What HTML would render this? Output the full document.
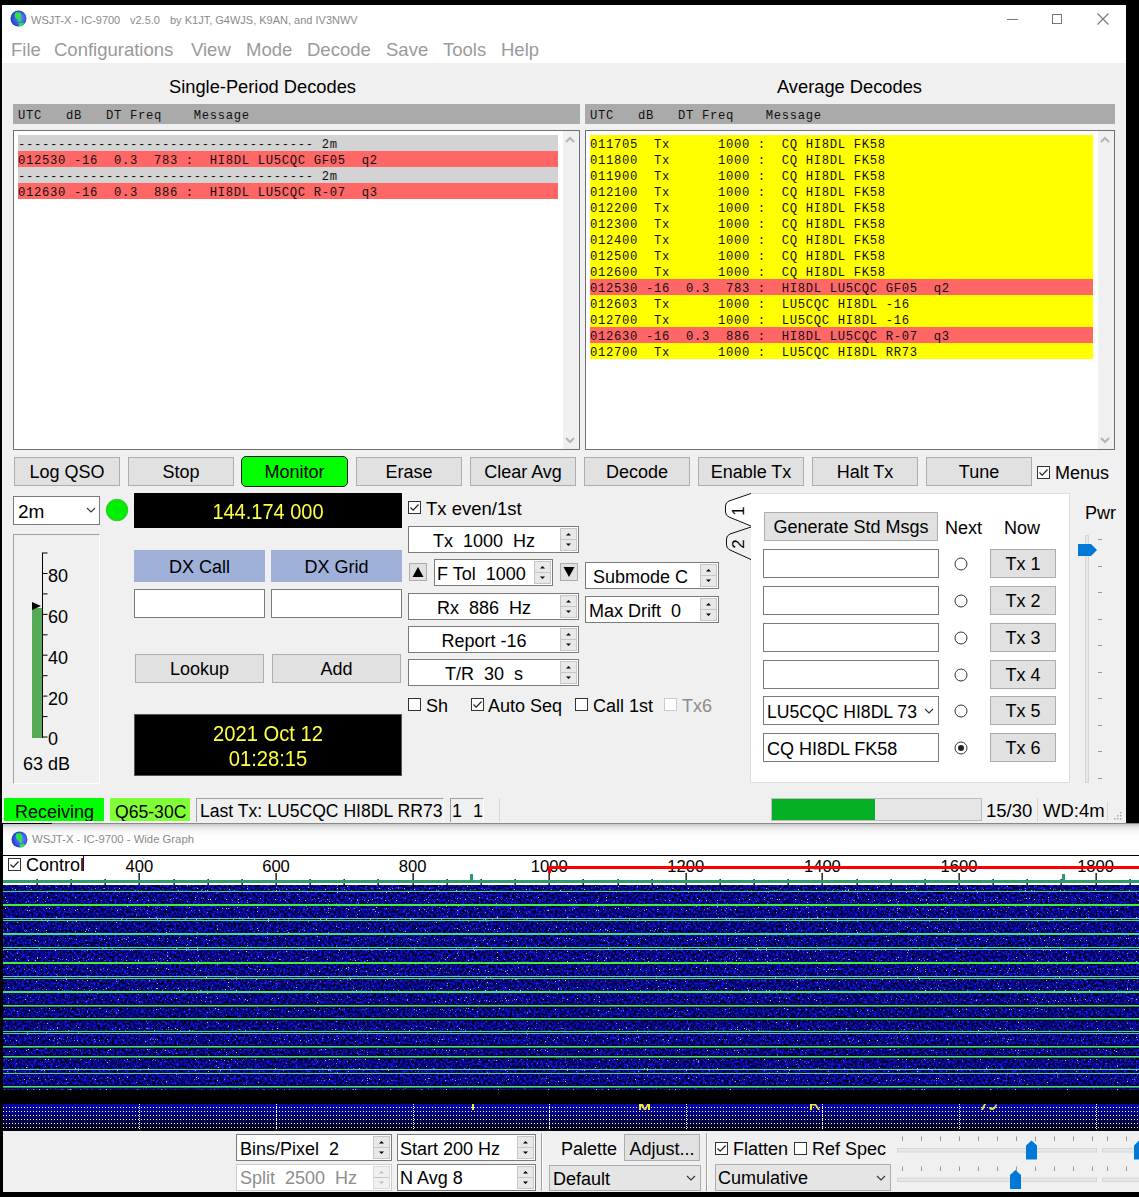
<!DOCTYPE html>
<html><head><meta charset="utf-8">
<style>
*{box-sizing:border-box;margin:0;padding:0}
html,body{width:1139px;height:1197px;overflow:hidden;background:#000}
body{position:relative;font-family:"Liberation Sans",sans-serif;color:#000}
.a{position:absolute}
.mono{font-family:"Liberation Mono",monospace}
#main{position:absolute;left:2px;top:5px;width:1124px;height:818px;background:#f0f0f0}
#titlebar{position:absolute;left:2px;top:5px;width:1124px;height:58px;background:#fff}
.ttl{font-size:11px;color:#8a8a8a;white-space:pre}
.menu{font-size:18.5px;color:#9a9a9a;top:39px;white-space:pre}
.sect{font-size:18.3px;white-space:pre}
.hdr{background:#aaa;height:20px;font-size:12.2px;letter-spacing:0.68px;line-height:25px;padding-left:5px;white-space:pre;color:#111}
.lst{background:#fff;border:1px solid #707070;}
.row{position:absolute;height:16px;font-size:12.2px;letter-spacing:0.68px;line-height:20px;white-space:pre;font-family:"Liberation Mono",monospace;color:#111}
.g{background:#d3d3d3}.r{background:#ff6666}.y{background:#ffff00}
.btn{position:absolute;background:#e1e1e1;border:1px solid #adadad;font-size:18px;text-align:center;white-space:pre;padding-top:1px}
.inp{position:absolute;background:#fff;border:1px solid #7a7a7a}
.chk{position:absolute;width:13px;height:13px;border:1px solid #333;background:#fff}
.lbl{position:absolute;font-size:18px;white-space:pre;margin-top:2px}
</style></head><body>
<div id="main"></div>
<div id="titlebar"></div>
<!-- title -->
<svg class="a" style="left:9.5px;top:10px" width="17" height="17" viewBox="0 0 17 17"><defs><radialGradient id="gl" cx="0.6" cy="0.5" r="0.6"><stop offset="0" stop-color="#6a8cff"/><stop offset="1" stop-color="#1a3acc"/></radialGradient></defs><circle cx="8.5" cy="8.5" r="8" fill="url(#gl)"/><path d="M5.5 2.5 Q8 1.8 10.5 2.8 L11.5 5.5 L10.5 8.5 L11.5 11.5 L9 12 L7.5 9.5 L5.5 8 L4.5 5 Z" fill="#2ee04a"/><path d="M8.5 13.2 L12.5 12.5 L14.5 13.8 L11.5 16.2 L9 16 Z" fill="#2ee04a"/></svg>
<div class="a ttl" style="left:31px;top:14px">WSJT-X - IC-9700</div><div class="a ttl" style="left:130px;top:14px">v2.5.0</div><div class="a ttl" style="left:170px;top:14px">by K1JT, G4WJS, K9AN, and IV3NWV</div>
<div class="a" style="left:1007px;top:19px;width:11px;height:1px;background:#777"></div>
<div class="a" style="left:1052px;top:14px;width:10px;height:10px;border:1px solid #777"></div>
<svg class="a" style="left:1097px;top:13px" width="12" height="12" viewBox="0 0 12 12"><path d="M0.5 0.5 L11.5 11.5 M11.5 0.5 L0.5 11.5" stroke="#777" stroke-width="1.1"/></svg>
<div class="a menu" style="left:11px">File</div>
<div class="a menu" style="left:54px">Configurations</div>
<div class="a menu" style="left:191px">View</div>
<div class="a menu" style="left:246px">Mode</div>
<div class="a menu" style="left:307px">Decode</div>
<div class="a menu" style="left:386px">Save</div>
<div class="a menu" style="left:443px">Tools</div>
<div class="a menu" style="left:501px">Help</div>
<!-- decodes -->
<div class="a sect" style="left:169px;top:76px">Single-Period Decodes</div>
<div class="a hdr mono" style="left:13px;top:104px;width:567px">UTC   dB   DT Freq    Message</div>
<div class="a lst" style="left:13px;top:130px;width:567px;height:320px"></div>
<div class="a" style="left:563px;top:131px;width:16px;height:318px;background:#f0f0f0"></div>
<div class="row g" style="left:18px;top:135px;width:540px">------------------------------------- 2m</div>
<div class="row r" style="left:18px;top:151px;width:540px">012530 -16  0.3  783 :  HI8DL LU5CQC GF05  q2</div>
<div class="row g" style="left:18px;top:167px;width:540px">------------------------------------- 2m</div>
<div class="row r" style="left:18px;top:183px;width:540px">012630 -16  0.3  886 :  HI8DL LU5CQC R-07  q3</div>
<div class="a sect" style="left:777px;top:76px">Average Decodes</div>
<div class="a hdr mono" style="left:585px;top:104px;width:530px">UTC   dB   DT Freq    Message</div>
<div class="a lst" style="left:585px;top:130px;width:530px;height:320px"></div>
<div class="a" style="left:1098px;top:131px;width:16px;height:318px;background:#f0f0f0"></div>
<div class="row y" style="left:590px;top:135px;width:503px">011705  Tx      1000 :  CQ HI8DL FK58</div>
<div class="row y" style="left:590px;top:151px;width:503px">011800  Tx      1000 :  CQ HI8DL FK58</div>
<div class="row y" style="left:590px;top:167px;width:503px">011900  Tx      1000 :  CQ HI8DL FK58</div>
<div class="row y" style="left:590px;top:183px;width:503px">012100  Tx      1000 :  CQ HI8DL FK58</div>
<div class="row y" style="left:590px;top:199px;width:503px">012200  Tx      1000 :  CQ HI8DL FK58</div>
<div class="row y" style="left:590px;top:215px;width:503px">012300  Tx      1000 :  CQ HI8DL FK58</div>
<div class="row y" style="left:590px;top:231px;width:503px">012400  Tx      1000 :  CQ HI8DL FK58</div>
<div class="row y" style="left:590px;top:247px;width:503px">012500  Tx      1000 :  CQ HI8DL FK58</div>
<div class="row y" style="left:590px;top:263px;width:503px">012600  Tx      1000 :  CQ HI8DL FK58</div>
<div class="row r" style="left:590px;top:279px;width:503px">012530 -16  0.3  783 :  HI8DL LU5CQC GF05  q2</div>
<div class="row y" style="left:590px;top:295px;width:503px">012603  Tx      1000 :  LU5CQC HI8DL -16</div>
<div class="row y" style="left:590px;top:311px;width:503px">012700  Tx      1000 :  LU5CQC HI8DL -16</div>
<div class="row r" style="left:590px;top:327px;width:503px">012630 -16  0.3  886 :  HI8DL LU5CQC R-07  q3</div>
<div class="row y" style="left:590px;top:343px;width:503px">012700  Tx      1000 :  LU5CQC HI8DL RR73</div>
<svg class="a" style="left:565px;top:136px" width="10" height="7" viewBox="0 0 10 7"><path d="M1 6 L5 2 L9 6" fill="none" stroke="#b4b4b4" stroke-width="2"/></svg>
<svg class="a" style="left:565px;top:437px" width="10" height="7" viewBox="0 0 10 7"><path d="M1 1 L5 5 L9 1" fill="none" stroke="#b4b4b4" stroke-width="2"/></svg>
<svg class="a" style="left:1100px;top:136px" width="10" height="7" viewBox="0 0 10 7"><path d="M1 6 L5 2 L9 6" fill="none" stroke="#b4b4b4" stroke-width="2"/></svg>
<svg class="a" style="left:1100px;top:437px" width="10" height="7" viewBox="0 0 10 7"><path d="M1 1 L5 5 L9 1" fill="none" stroke="#b4b4b4" stroke-width="2"/></svg>
<!-- controls -->
<div class="btn" style="left:14px;top:457px;width:106px;height:29px;line-height:27px">Log QSO</div>
<div class="btn" style="left:128px;top:457px;width:106px;height:29px;line-height:27px">Stop</div>
<div class="btn" style="left:241px;top:456px;width:107px;height:31px;line-height:28px;background:#00ff00;border:1px solid #1a1a1a;border-radius:5px">Monitor</div>
<div class="btn" style="left:356px;top:457px;width:106px;height:29px;line-height:27px">Erase</div>
<div class="btn" style="left:470px;top:457px;width:106px;height:29px;line-height:27px">Clear Avg</div>
<div class="btn" style="left:584px;top:457px;width:106px;height:29px;line-height:27px">Decode</div>
<div class="btn" style="left:698px;top:457px;width:106px;height:29px;line-height:27px">Enable Tx</div>
<div class="btn" style="left:812px;top:457px;width:106px;height:29px;line-height:27px">Halt Tx</div>
<div class="btn" style="left:926px;top:457px;width:106px;height:29px;line-height:27px">Tune</div>
<div class="chk" style="left:1037px;top:466px"><svg width="11" height="11" style="position:absolute;left:0;top:0" viewBox="0 0 11 11"><path d="M1.5 5.5 L4.2 8.2 L9.5 2.5" fill="none" stroke="#222" stroke-width="1.2"/></svg></div>
<div class="lbl" style="left:1055px;top:461px">Menus</div>
<div class="inp" style="left:13px;top:496px;width:87px;height:29px"></div>
<div class="lbl" style="left:18px;top:499px;font-size:19px">2m</div>
<svg class="a" style="left:86px;top:507px" width="10" height="6" viewBox="0 0 10 6"><path d="M1 1 L5 5 L9 1" fill="none" stroke="#333" stroke-width="1.1"/></svg>
<svg class="a" style="left:105px;top:498px" width="24" height="24" viewBox="0 0 24 24"><circle cx="12" cy="12" r="10.8" fill="#00ee00" stroke="#33bb33" stroke-width="0.8"/></svg>
<div class="a" style="left:134px;top:493px;width:268px;height:35px;background:#000"></div><div class="a" style="left:134px;top:494px;width:268px;height:35px;color:#ffff40;font-size:20px;line-height:35px;text-align:center;transform:scaleY(1.12)">144.174 000</div>
<div class="a" style="left:13px;top:534px;width:87px;height:250px;border-left:1px solid #a0a0a0;border-top:1px solid #a0a0a0;border-right:1px solid #fff;border-bottom:1px solid #fff"></div>
<svg class="a" style="left:20px;top:545px" width="75" height="230" viewBox="20 545 75 230"><rect x="32" y="608" width="10" height="130" fill="#55aa55"/><path d="M32 602 L41 606 L32 610 Z" fill="#000"/><line x1="42.5" y1="553" x2="42.5" y2="738" stroke="#000" stroke-width="1"/><line x1="42" y1="553.0" x2="47.5" y2="553.0" stroke="#000" stroke-width="1"/><line x1="42" y1="573.5" x2="47.5" y2="573.5" stroke="#000" stroke-width="1"/><line x1="42" y1="593.9" x2="47.5" y2="593.9" stroke="#000" stroke-width="1"/><line x1="42" y1="614.4" x2="47.5" y2="614.4" stroke="#000" stroke-width="1"/><line x1="42" y1="634.8" x2="47.5" y2="634.8" stroke="#000" stroke-width="1"/><line x1="42" y1="655.2" x2="47.5" y2="655.2" stroke="#000" stroke-width="1"/><line x1="42" y1="675.7" x2="47.5" y2="675.7" stroke="#000" stroke-width="1"/><line x1="42" y1="696.1" x2="47.5" y2="696.1" stroke="#000" stroke-width="1"/><line x1="42" y1="716.6" x2="47.5" y2="716.6" stroke="#000" stroke-width="1"/><line x1="42" y1="737.0" x2="47.5" y2="737.0" stroke="#000" stroke-width="1"/></svg>
<div class="lbl" style="left:48px;top:564px">80</div>
<div class="lbl" style="left:48px;top:605px">60</div>
<div class="lbl" style="left:48px;top:646px">40</div>
<div class="lbl" style="left:48px;top:687px">20</div>
<div class="lbl" style="left:48px;top:727px">0</div>
<div class="lbl" style="left:23px;top:752px">63 dB</div>
<div class="a" style="left:134px;top:550px;width:131px;height:32px;background:#9fb1d9;font-size:18px;line-height:32px;padding-top:1px;text-align:center">DX Call</div>
<div class="a" style="left:271px;top:550px;width:131px;height:32px;background:#9fb1d9;font-size:18px;line-height:32px;padding-top:1px;text-align:center">DX Grid</div>
<div class="inp" style="left:134px;top:589px;width:131px;height:29px"></div>
<div class="inp" style="left:271px;top:589px;width:131px;height:29px"></div>
<div class="btn" style="left:135px;top:654px;width:129px;height:29px;line-height:27px">Lookup</div>
<div class="btn" style="left:272px;top:654px;width:129px;height:29px;line-height:27px">Add</div>
<div class="a" style="left:134px;top:714px;width:268px;height:62px;background:#000;border:1px solid #555"></div><div class="a" style="left:134px;top:722px;width:268px;height:54px;color:#ffff40;font-size:20.2px;line-height:23.2px;text-align:center;transform:scaleY(1.08);transform-origin:50% 0">2021 Oct 12<br>01:28:15</div>
<!-- tx -->
<div class="chk" style="left:408px;top:501px;border-color:#333"><svg width="11" height="11" style="position:absolute;left:0;top:0" viewBox="0 0 11 11"><path d="M1.5 5.5 L4.2 8.2 L9.5 2.5" fill="none" stroke="#222" stroke-width="1.2"/></svg></div>
<div class="lbl" style="left:426px;top:496px;font-size:18.5px">Tx even/1st</div>
<div class="inp" style="left:408px;top:526px;width:171px;height:27px"></div><div class="a" style="left:560px;top:528px;width:17px;height:23px;background:#e8e8e8;border:1px solid #c6c6c6"></div><div class="a" style="left:561px;top:539px;width:15px;height:1px;background:#c6c6c6"></div><svg class="a" style="left:560px;top:526px" width="17" height="27" viewBox="0 0 17 27"><path d="M6 9.5 L11 9.5 L8.5 7.0 Z" fill="#000"/><path d="M6 17.5 L11 17.5 L8.5 20.0 Z" fill="#000"/></svg><div class="lbl" style="left:408px;top:526px;width:152px;height:27px;line-height:27px;text-align:center;padding-left:0px">Tx&nbsp;&nbsp;1000&nbsp;&nbsp;Hz</div>
<div class="btn" style="left:409px;top:563px;width:18px;height:18px"></div><svg class="a" style="left:409px;top:563px" width="18" height="18" viewBox="0 0 18 18"><path d="M3.5 14 L14.5 14 L9 4 Z" fill="#000"/></svg>
<div class="inp" style="left:434px;top:559px;width:119px;height:27px"></div><div class="a" style="left:534px;top:561px;width:17px;height:23px;background:#e8e8e8;border:1px solid #c6c6c6"></div><div class="a" style="left:535px;top:572px;width:15px;height:1px;background:#c6c6c6"></div><svg class="a" style="left:534px;top:559px" width="17" height="27" viewBox="0 0 17 27"><path d="M6 9.5 L11 9.5 L8.5 7.0 Z" fill="#000"/><path d="M6 17.5 L11 17.5 L8.5 20.0 Z" fill="#000"/></svg><div class="lbl" style="left:437px;top:559px;height:27px;line-height:27px">F Tol&nbsp;&nbsp;1000</div>
<div class="btn" style="left:560px;top:563px;width:18px;height:18px"></div><svg class="a" style="left:560px;top:563px" width="18" height="18" viewBox="0 0 18 18"><path d="M3.5 4 L14.5 4 L9 14 Z" fill="#000"/></svg>
<div class="inp" style="left:585px;top:562px;width:134px;height:27px"></div><div class="a" style="left:700px;top:564px;width:17px;height:23px;background:#e8e8e8;border:1px solid #c6c6c6"></div><div class="a" style="left:701px;top:575px;width:15px;height:1px;background:#c6c6c6"></div><svg class="a" style="left:700px;top:562px" width="17" height="27" viewBox="0 0 17 27"><path d="M6 9.5 L11 9.5 L8.5 7.0 Z" fill="#000"/><path d="M6 17.5 L11 17.5 L8.5 20.0 Z" fill="#000"/></svg><div class="lbl" style="left:593px;top:562px;height:27px;line-height:27px">Submode C</div>
<div class="inp" style="left:408px;top:593px;width:171px;height:27px"></div><div class="a" style="left:560px;top:595px;width:17px;height:23px;background:#e8e8e8;border:1px solid #c6c6c6"></div><div class="a" style="left:561px;top:606px;width:15px;height:1px;background:#c6c6c6"></div><svg class="a" style="left:560px;top:593px" width="17" height="27" viewBox="0 0 17 27"><path d="M6 9.5 L11 9.5 L8.5 7.0 Z" fill="#000"/><path d="M6 17.5 L11 17.5 L8.5 20.0 Z" fill="#000"/></svg><div class="lbl" style="left:408px;top:593px;width:152px;height:27px;line-height:27px;text-align:center;padding-left:0px">Rx&nbsp;&nbsp;886&nbsp;&nbsp;Hz</div>
<div class="inp" style="left:585px;top:596px;width:134px;height:27px"></div><div class="a" style="left:700px;top:598px;width:17px;height:23px;background:#e8e8e8;border:1px solid #c6c6c6"></div><div class="a" style="left:701px;top:609px;width:15px;height:1px;background:#c6c6c6"></div><svg class="a" style="left:700px;top:596px" width="17" height="27" viewBox="0 0 17 27"><path d="M6 9.5 L11 9.5 L8.5 7.0 Z" fill="#000"/><path d="M6 17.5 L11 17.5 L8.5 20.0 Z" fill="#000"/></svg><div class="lbl" style="left:589px;top:596px;height:27px;line-height:27px">Max Drift&nbsp;&nbsp;0</div>
<div class="inp" style="left:408px;top:626px;width:171px;height:27px"></div><div class="a" style="left:560px;top:628px;width:17px;height:23px;background:#e8e8e8;border:1px solid #c6c6c6"></div><div class="a" style="left:561px;top:639px;width:15px;height:1px;background:#c6c6c6"></div><svg class="a" style="left:560px;top:626px" width="17" height="27" viewBox="0 0 17 27"><path d="M6 9.5 L11 9.5 L8.5 7.0 Z" fill="#000"/><path d="M6 17.5 L11 17.5 L8.5 20.0 Z" fill="#000"/></svg><div class="lbl" style="left:408px;top:626px;width:152px;height:27px;line-height:27px;text-align:center;padding-left:0px">Report -16</div>
<div class="inp" style="left:408px;top:659px;width:171px;height:27px"></div><div class="a" style="left:560px;top:661px;width:17px;height:23px;background:#e8e8e8;border:1px solid #c6c6c6"></div><div class="a" style="left:561px;top:672px;width:15px;height:1px;background:#c6c6c6"></div><svg class="a" style="left:560px;top:659px" width="17" height="27" viewBox="0 0 17 27"><path d="M6 9.5 L11 9.5 L8.5 7.0 Z" fill="#000"/><path d="M6 17.5 L11 17.5 L8.5 20.0 Z" fill="#000"/></svg><div class="lbl" style="left:408px;top:659px;width:152px;height:27px;line-height:27px;text-align:center;padding-left:0px">T/R&nbsp;&nbsp;30&nbsp;&nbsp;s</div>
<div class="chk" style="left:408px;top:698px;border-color:#333"></div>
<div class="lbl" style="left:426px;top:694px">Sh</div>
<div class="chk" style="left:471px;top:698px;border-color:#333"><svg width="11" height="11" style="position:absolute;left:0;top:0" viewBox="0 0 11 11"><path d="M1.5 5.5 L4.2 8.2 L9.5 2.5" fill="none" stroke="#222" stroke-width="1.2"/></svg></div>
<div class="lbl" style="left:488px;top:694px">Auto Seq</div>
<div class="chk" style="left:575px;top:698px;border-color:#333"></div>
<div class="lbl" style="left:593px;top:694px">Call 1st</div>
<div class="chk" style="left:664px;top:698px;border-color:#ccc"></div>
<div class="lbl" style="left:682px;top:694px;color:#8c8c8c">Tx6</div>
<div class="a" style="left:750px;top:493px;width:320px;height:290px;background:#fff;border:1px solid #dcdcdc"></div>
<svg class="a" style="left:720px;top:488px" width="35" height="80" viewBox="720 488 35 80"><path d="M751 493.5 L729 501 Q725.5 502.5 725.5 506 L725.5 512 Q725.5 515.5 729 517 L751 526" fill="#fff" stroke="#111" stroke-width="1"/><path d="M751 527 L730 534 Q726.5 535.5 726.5 539 L726.5 545 Q726.5 548.5 730 550 L751 559.5" fill="#f0f0f0" stroke="#111" stroke-width="1"/></svg>
<div class="lbl" style="left:731px;top:499px;width:16px;height:20px;line-height:20px;text-align:center;font-size:17px;transform:rotate(-90deg)">1</div>
<div class="lbl" style="left:731px;top:532px;width:16px;height:20px;line-height:20px;text-align:center;font-size:17px;transform:rotate(-90deg)">2</div>
<div class="btn" style="left:764px;top:512px;width:174px;height:29px;line-height:27px">Generate Std Msgs</div>
<div class="lbl" style="left:945px;top:516px">Next</div>
<div class="lbl" style="left:1004px;top:516px">Now</div>
<div class="inp" style="left:763px;top:549px;width:176px;height:29px"></div>
<svg class="a" style="left:953px;top:555.5px" width="16" height="16" viewBox="0 0 16 16"><circle cx="8" cy="8" r="6" fill="#fff" stroke="#333" stroke-width="1"/></svg>
<div class="btn" style="left:990px;top:549px;width:66px;height:29px;line-height:27px">Tx 1</div>
<div class="inp" style="left:763px;top:586px;width:176px;height:29px"></div>
<svg class="a" style="left:953px;top:592.5px" width="16" height="16" viewBox="0 0 16 16"><circle cx="8" cy="8" r="6" fill="#fff" stroke="#333" stroke-width="1"/></svg>
<div class="btn" style="left:990px;top:586px;width:66px;height:29px;line-height:27px">Tx 2</div>
<div class="inp" style="left:763px;top:623px;width:176px;height:29px"></div>
<svg class="a" style="left:953px;top:629.5px" width="16" height="16" viewBox="0 0 16 16"><circle cx="8" cy="8" r="6" fill="#fff" stroke="#333" stroke-width="1"/></svg>
<div class="btn" style="left:990px;top:623px;width:66px;height:29px;line-height:27px">Tx 3</div>
<div class="inp" style="left:763px;top:660px;width:176px;height:29px"></div>
<svg class="a" style="left:953px;top:666.5px" width="16" height="16" viewBox="0 0 16 16"><circle cx="8" cy="8" r="6" fill="#fff" stroke="#333" stroke-width="1"/></svg>
<div class="btn" style="left:990px;top:660px;width:66px;height:29px;line-height:27px">Tx 4</div>
<div class="inp" style="left:763px;top:696px;width:176px;height:29px"></div>
<div class="lbl" style="left:767px;top:696px;height:29px;line-height:29px;font-size:17.6px">LU5CQC HI8DL 73</div>
<svg class="a" style="left:924px;top:708px" width="10" height="6" viewBox="0 0 10 6"><path d="M1 1 L5 5 L9 1" fill="none" stroke="#333" stroke-width="1.1"/></svg>
<svg class="a" style="left:953px;top:702.5px" width="16" height="16" viewBox="0 0 16 16"><circle cx="8" cy="8" r="6" fill="#fff" stroke="#333" stroke-width="1"/></svg>
<div class="btn" style="left:990px;top:696px;width:66px;height:29px;line-height:27px">Tx 5</div>
<div class="inp" style="left:763px;top:733px;width:176px;height:29px"></div>
<div class="lbl" style="left:767px;top:733px;height:29px;line-height:29px">CQ HI8DL FK58</div>
<svg class="a" style="left:953px;top:739.5px" width="16" height="16" viewBox="0 0 16 16"><circle cx="8" cy="8" r="6" fill="#fff" stroke="#333" stroke-width="1"/><circle cx="8" cy="8" r="3" fill="#222"/></svg>
<div class="btn" style="left:990px;top:733px;width:66px;height:29px;line-height:27px">Tx 6</div>
<div class="lbl" style="left:1085px;top:501px">Pwr</div>
<div class="a" style="left:1085px;top:535px;width:4px;height:248px;background:#e7e7e7;border:1px solid #d6d6d6"></div>
<svg class="a" style="left:1077px;top:543px" width="22" height="14" viewBox="0 0 22 14"><path d="M1 1 L14 1 L20 7 L14 13 L1 13 Z" fill="#0078d7"/></svg>
<div class="a" style="left:1098px;top:539px;width:4px;height:1px;background:#9a9a9a"></div>
<div class="a" style="left:1098px;top:566px;width:4px;height:1px;background:#9a9a9a"></div>
<div class="a" style="left:1098px;top:592px;width:4px;height:1px;background:#9a9a9a"></div>
<div class="a" style="left:1098px;top:619px;width:4px;height:1px;background:#9a9a9a"></div>
<div class="a" style="left:1098px;top:645px;width:4px;height:1px;background:#9a9a9a"></div>
<div class="a" style="left:1098px;top:672px;width:4px;height:1px;background:#9a9a9a"></div>
<div class="a" style="left:1098px;top:698px;width:4px;height:1px;background:#9a9a9a"></div>
<div class="a" style="left:1098px;top:725px;width:4px;height:1px;background:#9a9a9a"></div>
<div class="a" style="left:1098px;top:751px;width:4px;height:1px;background:#9a9a9a"></div>
<div class="a" style="left:1098px;top:778px;width:4px;height:1px;background:#9a9a9a"></div>
<div class="a" style="left:4px;top:798px;width:100px;height:23px;background:#00ff00;overflow:hidden"><div class="lbl" style="left:11px;top:2px">Receiving</div></div>
<div class="a" style="left:110px;top:798px;width:80px;height:23px;background:#80ff38;overflow:hidden"><div class="lbl" style="left:5px;top:1.5px;font-size:17.6px">Q65-30C</div></div>
<div class="a" style="left:196px;top:798px;width:248px;height:24px;border-left:1px solid #a0a0a0;border-top:1px solid #a0a0a0;border-right:1px solid #fff"></div><div class="lbl" style="left:200px;top:799px;font-size:17.6px">Last Tx: LU5CQC HI8DL RR73</div>
<div class="a" style="left:450px;top:798px;width:34px;height:24px;border-left:1px solid #a0a0a0;border-top:1px solid #a0a0a0;border-right:1px solid #fff"></div><div class="lbl" style="left:452px;top:799px">1</div><div class="lbl" style="left:473px;top:799px">1</div>
<div class="a" style="left:499px;top:798px;width:1px;height:24px;background:#d8d8d8"></div>
<div class="a" style="left:771px;top:798px;width:211px;height:23px;background:#e6e6e6;border:1px solid #bcbcbc"><div class="a" style="left:0;top:0;width:103px;height:21px;background:#06b025"></div></div>
<div class="lbl" style="left:986px;top:798px;font-size:18.5px">15/30</div>
<div class="a" style="left:1037px;top:798px;width:1px;height:24px;background:#d8d8d8"></div>
<div class="lbl" style="left:1043px;top:798px;font-size:18.5px">WD:4m</div><div class="a" style="left:1107px;top:802px;width:1px;height:18px;background:#d8d8d8"></div><svg class="a" style="left:1114px;top:812px" width="10" height="10" viewBox="0 0 10 10"><g fill="#a8a8a8"><rect x="6" y="0" width="1.5" height="1.5"/><rect x="3" y="3" width="1.5" height="1.5"/><rect x="6" y="3" width="1.5" height="1.5"/><rect x="0" y="6" width="1.5" height="1.5"/><rect x="3" y="6" width="1.5" height="1.5"/><rect x="6" y="6" width="1.5" height="1.5"/></g></svg>
<!-- WIDE -->
<div class="a" style="left:0;top:823px;width:1139px;height:374px;background:#000"></div>
<div class="a" style="left:3px;top:824px;width:1136px;height:31px;background:linear-gradient(#c4c4c4,#e6e6e6 3px,#f5f5f5 7px,#fcfcfc 11px,#fff 15px)"></div>
<div class="a" style="left:52px;top:823px;width:1087px;height:1px;background:#8a8a8a"></div>
<svg class="a" style="left:11px;top:831px" width="17" height="17" viewBox="0 0 17 17"><circle cx="8.5" cy="8.5" r="8" fill="url(#gl)"/><path d="M5.5 2.5 Q8 1.8 10.5 2.8 L11.5 5.5 L10.5 8.5 L11.5 11.5 L9 12 L7.5 9.5 L5.5 8 L4.5 5 Z" fill="#2ee04a"/><path d="M8.5 13.2 L12.5 12.5 L14.5 13.8 L11.5 16.2 L9 16 Z" fill="#2ee04a"/></svg>
<div class="a ttl" style="left:32px;top:833px;font-size:11.3px">WSJT-X - IC-9700 - Wide Graph</div>
<div class="a" style="left:3px;top:856px;width:1136px;height:29px;background:#fff"></div>
<div class="chk" style="left:8px;top:858px"><svg width="11" height="11" style="position:absolute;left:0;top:0" viewBox="0 0 11 11"><path d="M1.5 5.5 L4.2 8.2 L9.5 2.5" fill="none" stroke="#222" stroke-width="1.2"/></svg></div>
<div class="lbl" style="left:26px;top:853px">Control</div><div class="a" style="left:83px;top:856px;width:1px;height:15px;background:#2a1a1a"></div>
<svg class="a" style="left:0;top:856px" width="1139" height="29" viewBox="0 856 1139 29"><rect x="36.5" y="879" width="1.3" height="6" fill="#000"/><rect x="70.5" y="879" width="1.3" height="6" fill="#000"/><rect x="104.5" y="879" width="1.3" height="6" fill="#000"/><rect x="138.5" y="873" width="1.3" height="12" fill="#000"/><rect x="173.5" y="879" width="1.3" height="6" fill="#000"/><rect x="207.5" y="879" width="1.3" height="6" fill="#000"/><rect x="241.5" y="879" width="1.3" height="6" fill="#000"/><rect x="275.5" y="873" width="1.3" height="12" fill="#000"/><rect x="309.5" y="879" width="1.3" height="6" fill="#000"/><rect x="343.5" y="879" width="1.3" height="6" fill="#000"/><rect x="377.5" y="879" width="1.3" height="6" fill="#000"/><rect x="412.5" y="873" width="1.3" height="12" fill="#000"/><rect x="446.5" y="879" width="1.3" height="6" fill="#000"/><rect x="480.5" y="879" width="1.3" height="6" fill="#000"/><rect x="514.5" y="879" width="1.3" height="6" fill="#000"/><rect x="548.5" y="873" width="1.3" height="12" fill="#000"/><rect x="582.5" y="879" width="1.3" height="6" fill="#000"/><rect x="617.5" y="879" width="1.3" height="6" fill="#000"/><rect x="651.5" y="879" width="1.3" height="6" fill="#000"/><rect x="685.5" y="873" width="1.3" height="12" fill="#000"/><rect x="719.5" y="879" width="1.3" height="6" fill="#000"/><rect x="753.5" y="879" width="1.3" height="6" fill="#000"/><rect x="787.5" y="879" width="1.3" height="6" fill="#000"/><rect x="821.5" y="873" width="1.3" height="12" fill="#000"/><rect x="856.5" y="879" width="1.3" height="6" fill="#000"/><rect x="890.5" y="879" width="1.3" height="6" fill="#000"/><rect x="924.5" y="879" width="1.3" height="6" fill="#000"/><rect x="958.5" y="873" width="1.3" height="12" fill="#000"/><rect x="992.5" y="879" width="1.3" height="6" fill="#000"/><rect x="1026.5" y="879" width="1.3" height="6" fill="#000"/><rect x="1060.5" y="879" width="1.3" height="6" fill="#000"/><rect x="1095.5" y="873" width="1.3" height="12" fill="#000"/><rect x="1129.5" y="879" width="1.3" height="6" fill="#000"/></svg>
<div class="lbl" style="left:109.4px;top:856px;width:60px;text-align:center;font-size:16.6px;line-height:18px">400</div>
<div class="lbl" style="left:246.0px;top:856px;width:60px;text-align:center;font-size:16.6px;line-height:18px">600</div>
<div class="lbl" style="left:382.6px;top:856px;width:60px;text-align:center;font-size:16.6px;line-height:18px">800</div>
<div class="lbl" style="left:519.2px;top:856px;width:60px;text-align:center;font-size:16.6px;line-height:18px">1000</div>
<div class="lbl" style="left:655.8px;top:856px;width:60px;text-align:center;font-size:16.6px;line-height:18px">1200</div>
<div class="lbl" style="left:792.4px;top:856px;width:60px;text-align:center;font-size:16.6px;line-height:18px">1400</div>
<div class="lbl" style="left:929.0px;top:856px;width:60px;text-align:center;font-size:16.6px;line-height:18px">1600</div>
<div class="lbl" style="left:1065.6px;top:856px;width:60px;text-align:center;font-size:16.6px;line-height:18px">1800</div>
<svg class="a" style="left:0;top:856px" width="1139" height="29" viewBox="0 856 1139 29"><rect x="548" y="866" width="591" height="3" fill="#ff0000"/><rect x="548" y="866" width="3" height="7" fill="#ff0000"/><rect x="3" y="880" width="1136" height="3" fill="#2e9b6e"/><rect x="470" y="874" width="3" height="6" fill="#2e9b6e"/><rect x="1062" y="874" width="3" height="6" fill="#2e9b6e"/></svg>
<svg class="a" style="left:3px;top:885px" width="1136" height="205" viewBox="0 0 1136 205"><defs><filter id="wf" x="0" y="0" width="1136" height="205" filterUnits="userSpaceOnUse" color-interpolation-filters="sRGB">
<feTurbulence type="fractalNoise" baseFrequency="0.42" numOctaves="2" seed="7" result="n"/>
<feColorMatrix in="n" type="matrix" values="0.1 0 0 0 0  0.13 0 0 0 0  1 0 0 0 0  0 0 0 0 1" result="c"/>
<feComponentTransfer in="c" result="b"><feFuncR type="linear" slope="2.2" intercept="-0.08"/><feFuncG type="linear" slope="2.2" intercept="-0.12"/><feFuncB type="linear" slope="2.0" intercept="-0.5"/></feComponentTransfer>
<feTurbulence type="fractalNoise" baseFrequency="0.9" numOctaves="1" seed="11" result="n2"/>
<feColorMatrix in="n2" type="matrix" values="0 0 0 0 0.7  0 0 0 0 0.78  0 0 0 0 1  14 0 0 0 -9.7" result="w"/>
<feComposite in="w" in2="b" operator="over"/>
</filter></defs><rect x="0" y="0" width="1136" height="205" fill="#000" filter="url(#wf)"/></svg>
<svg class="a" style="left:0;top:885px" width="1139" height="205" viewBox="0 885 1139 205"><rect x="3" y="891" width="1136" height="1" fill="#48dc7c"/><rect x="3" y="904" width="1136" height="2" fill="#3cf03c"/><rect x="3" y="918" width="1136" height="1" fill="#48dc7c"/><rect x="3" y="920" width="1136" height="1" fill="#48dc7c"/><rect x="3" y="933" width="1136" height="2" fill="#40e07a"/><rect x="3" y="947" width="1136" height="1" fill="#48dc7c"/><rect x="3" y="949" width="1136" height="1" fill="#48dc7c"/><rect x="3" y="962" width="1136" height="2" fill="#3cf03c"/><rect x="3" y="976" width="1136" height="1" fill="#48dc7c"/><rect x="3" y="978" width="1136" height="1" fill="#48dc7c"/><rect x="3" y="991" width="1136" height="2" fill="#44e868"/><rect x="3" y="1004" width="1136" height="4" fill="#000" opacity="0.6"/><rect x="3" y="1005" width="1136" height="1.6" fill="#48dc7c"/><rect x="3" y="1017" width="1136" height="4" fill="#000" opacity="0.6"/><rect x="3" y="1018" width="1136" height="1.6" fill="#48dc7c"/><rect x="3" y="1031" width="1136" height="1" fill="#48dc7c"/><rect x="3" y="1033" width="1136" height="1" fill="#48dc7c"/><rect x="3" y="1045" width="1136" height="4" fill="#000" opacity="0.6"/><rect x="3" y="1046" width="1136" height="1.6" fill="#48dc7c"/><rect x="3" y="1055" width="1136" height="4" fill="#000" opacity="0.6"/><rect x="3" y="1056" width="1136" height="1.6" fill="#48dc7c"/><rect x="3" y="1069" width="1136" height="1" fill="#48dc7c"/><rect x="3" y="1073" width="1136" height="1" fill="#48dc7c"/><rect x="3" y="1085" width="1136" height="4" fill="#000" opacity="0.6"/><rect x="3" y="1086" width="1136" height="1.6" fill="#48dc7c"/></svg>
<svg class="a" style="left:3px;top:1104px" width="1136" height="27" viewBox="3 1104 1136 27"><defs><linearGradient id="dg" x1="0" y1="0" x2="0" y2="1"><stop offset="0" stop-color="#0808a8"/><stop offset="0.35" stop-color="#04047a"/><stop offset="1" stop-color="#000008"/></linearGradient><pattern id="dp" x="0" y="1107" width="3" height="4" patternUnits="userSpaceOnUse"><rect x="0" y="0" width="1" height="1" fill="#fff"/></pattern><pattern id="vp" x="0" y="1104" width="1" height="2" patternUnits="userSpaceOnUse"><rect x="0" y="0" width="1" height="1" fill="#fff"/></pattern></defs><rect x="3" y="1104" width="1136" height="27" fill="url(#dg)"/><rect x="3" y="1107" width="1136" height="22" fill="url(#dp)"/><rect x="139" y="1104" width="1" height="25" fill="url(#vp)"/><rect x="276" y="1104" width="1" height="25" fill="url(#vp)"/><rect x="413" y="1104" width="1" height="25" fill="url(#vp)"/><rect x="549" y="1104" width="1" height="25" fill="url(#vp)"/><rect x="686" y="1104" width="1" height="25" fill="url(#vp)"/><rect x="822" y="1104" width="1" height="25" fill="url(#vp)"/><rect x="959" y="1104" width="1" height="25" fill="url(#vp)"/><rect x="1096" y="1104" width="1" height="25" fill="url(#vp)"/><g fill="#eee830"><rect x="472" y="1104" width="2" height="6"/><rect x="639" y="1104" width="2" height="6"/><rect x="648" y="1104" width="2" height="6"/><path d="M641 1104 L643 1104 L645 1109 L647 1104 L648 1104 L648 1106 L646 1110 L644 1110 L641 1106 Z"/><rect x="810" y="1104" width="2" height="6"/><rect x="810" y="1104" width="6" height="1.5"/><path d="M814 1104 L816 1104 L820 1110 L818 1110 Z"/><path d="M984 1104 L986 1104 L983 1110 L981 1110 Z"/><path d="M989 1107 L991 1107 Q992 1108.5 994 1107 L996 1104 L997 1105 Q995 1110 992 1110 Q989 1110 989 1107 Z"/></g></svg>
<div class="a" style="left:3px;top:1131px;width:1136px;height:61px;background:#f0f0f0"></div>
<div class="inp" style="left:236px;top:1134px;width:156px;height:27px;border-color:#7a7a7a"></div><div class="a" style="left:373px;top:1136px;width:17px;height:23px;background:#e8e8e8;border:1px solid #c6c6c6"></div><div class="a" style="left:374px;top:1147px;width:15px;height:1px;background:#c6c6c6"></div><svg class="a" style="left:373px;top:1134px" width="17" height="27" viewBox="0 0 17 27"><path d="M6 9.5 L11 9.5 L8.5 7.0 Z" fill="#000"/><path d="M6 17.5 L11 17.5 L8.5 20.0 Z" fill="#000"/></svg><div class="lbl" style="left:240px;top:1133px;height:27px;line-height:29px;">Bins/Pixel&nbsp;&nbsp;2</div>
<div class="inp" style="left:397px;top:1134px;width:139px;height:27px;border-color:#7a7a7a"></div><div class="a" style="left:517px;top:1136px;width:17px;height:23px;background:#e8e8e8;border:1px solid #c6c6c6"></div><div class="a" style="left:518px;top:1147px;width:15px;height:1px;background:#c6c6c6"></div><svg class="a" style="left:517px;top:1134px" width="17" height="27" viewBox="0 0 17 27"><path d="M6 9.5 L11 9.5 L8.5 7.0 Z" fill="#000"/><path d="M6 17.5 L11 17.5 L8.5 20.0 Z" fill="#000"/></svg><div class="lbl" style="left:400px;top:1133px;height:27px;line-height:29px;">Start 200 Hz</div>
<div class="inp" style="left:236px;top:1164px;width:156px;height:27px;border-color:#cccccc"></div><div class="a" style="left:373px;top:1166px;width:17px;height:23px;background:#f0f0f0;border:1px solid #dadada"></div><div class="a" style="left:374px;top:1177px;width:15px;height:1px;background:#c6c6c6"></div><svg class="a" style="left:373px;top:1164px" width="17" height="27" viewBox="0 0 17 27"><path d="M6 9.5 L11 9.5 L8.5 7.0 Z" fill="#bbb"/><path d="M6 17.5 L11 17.5 L8.5 20.0 Z" fill="#bbb"/></svg><div class="lbl" style="left:240px;top:1162px;height:27px;line-height:29px;color:#8d8d8d">Split&nbsp;&nbsp;2500&nbsp;&nbsp;Hz</div>
<div class="inp" style="left:397px;top:1164px;width:139px;height:27px;border-color:#7a7a7a"></div><div class="a" style="left:517px;top:1166px;width:17px;height:23px;background:#e8e8e8;border:1px solid #c6c6c6"></div><div class="a" style="left:518px;top:1177px;width:15px;height:1px;background:#c6c6c6"></div><svg class="a" style="left:517px;top:1164px" width="17" height="27" viewBox="0 0 17 27"><path d="M6 9.5 L11 9.5 L8.5 7.0 Z" fill="#000"/><path d="M6 17.5 L11 17.5 L8.5 20.0 Z" fill="#000"/></svg><div class="lbl" style="left:400px;top:1162px;height:27px;line-height:29px;">N Avg 8</div>
<div class="a" style="left:541px;top:1133px;width:1px;height:58px;background:#a0a0a0"></div><div class="a" style="left:542px;top:1133px;width:1px;height:58px;background:#fff"></div>
<div class="lbl" style="left:561px;top:1137px">Palette</div>
<div class="btn" style="left:624px;top:1134px;width:76px;height:27px;line-height:26px">Adjust...</div>
<div class="a" style="left:549px;top:1165px;width:152px;height:26px;background:#e5e5e5;border:1px solid #adadad"></div>
<div class="lbl" style="left:553px;top:1164px;line-height:26px">Default</div>
<svg class="a" style="left:686px;top:1175px" width="10" height="6" viewBox="0 0 10 6"><path d="M1 1 L5 5 L9 1" fill="none" stroke="#333" stroke-width="1.1"/></svg>
<div class="a" style="left:706px;top:1133px;width:1px;height:58px;background:#a0a0a0"></div><div class="a" style="left:707px;top:1133px;width:1px;height:58px;background:#fff"></div>
<div class="chk" style="left:715px;top:1142px"><svg width="11" height="11" style="position:absolute;left:0;top:0" viewBox="0 0 11 11"><path d="M1.5 5.5 L4.2 8.2 L9.5 2.5" fill="none" stroke="#222" stroke-width="1.2"/></svg></div>
<div class="lbl" style="left:733px;top:1137px">Flatten</div>
<div class="chk" style="left:794px;top:1142px"></div>
<div class="lbl" style="left:812px;top:1137px">Ref Spec</div>
<div class="a" style="left:715px;top:1164px;width:176px;height:27px;background:#e5e5e5;border:1px solid #adadad"></div>
<div class="lbl" style="left:718px;top:1163px;line-height:27px">Cumulative</div>
<svg class="a" style="left:876px;top:1175px" width="10" height="6" viewBox="0 0 10 6"><path d="M1 1 L5 5 L9 1" fill="none" stroke="#333" stroke-width="1.1"/></svg>
<svg class="a" style="left:890px;top:1131px" width="249" height="61" viewBox="890 1131 249 61"><rect x="897.5" y="1148.5" width="199" height="3.5" fill="#e7e7e7" stroke="#d6d6d6" stroke-width="1"/><rect x="1102.5" y="1148.5" width="60" height="3.5" fill="#e7e7e7" stroke="#d6d6d6" stroke-width="1"/><rect x="902" y="1136.5" width="1" height="4.5" fill="#9a9a9a"/><rect x="921" y="1136.5" width="1" height="4.5" fill="#9a9a9a"/><rect x="940" y="1136.5" width="1" height="4.5" fill="#9a9a9a"/><rect x="959" y="1136.5" width="1" height="4.5" fill="#9a9a9a"/><rect x="978" y="1136.5" width="1" height="4.5" fill="#9a9a9a"/><rect x="997" y="1136.5" width="1" height="4.5" fill="#9a9a9a"/><rect x="1016" y="1136.5" width="1" height="4.5" fill="#9a9a9a"/><rect x="1035" y="1136.5" width="1" height="4.5" fill="#9a9a9a"/><rect x="1054" y="1136.5" width="1" height="4.5" fill="#9a9a9a"/><rect x="1073" y="1136.5" width="1" height="4.5" fill="#9a9a9a"/><rect x="1092" y="1136.5" width="1" height="4.5" fill="#9a9a9a"/><rect x="1107" y="1136.5" width="1" height="4.5" fill="#9a9a9a"/><rect x="1126" y="1136.5" width="1" height="4.5" fill="#9a9a9a"/><path d="M1026.0 1159.5 L1026.0 1145.5 L1031.5 1140.5 L1037.0 1145.5 L1037.0 1159.5 Z" fill="#0078d7"/><rect x="897.5" y="1178" width="199" height="3.5" fill="#e7e7e7" stroke="#d6d6d6" stroke-width="1"/><rect x="1102.5" y="1178" width="60" height="3.5" fill="#e7e7e7" stroke="#d6d6d6" stroke-width="1"/><rect x="902" y="1166.5" width="1" height="4.5" fill="#9a9a9a"/><rect x="921" y="1166.5" width="1" height="4.5" fill="#9a9a9a"/><rect x="940" y="1166.5" width="1" height="4.5" fill="#9a9a9a"/><rect x="959" y="1166.5" width="1" height="4.5" fill="#9a9a9a"/><rect x="978" y="1166.5" width="1" height="4.5" fill="#9a9a9a"/><rect x="997" y="1166.5" width="1" height="4.5" fill="#9a9a9a"/><rect x="1016" y="1166.5" width="1" height="4.5" fill="#9a9a9a"/><rect x="1035" y="1166.5" width="1" height="4.5" fill="#9a9a9a"/><rect x="1054" y="1166.5" width="1" height="4.5" fill="#9a9a9a"/><rect x="1073" y="1166.5" width="1" height="4.5" fill="#9a9a9a"/><rect x="1092" y="1166.5" width="1" height="4.5" fill="#9a9a9a"/><rect x="1107" y="1166.5" width="1" height="4.5" fill="#9a9a9a"/><rect x="1126" y="1166.5" width="1" height="4.5" fill="#9a9a9a"/><path d="M1010.0 1189 L1010.0 1175 L1015.5 1170 L1021.0 1175 L1021.0 1189 Z" fill="#0078d7"/><path d="M1134 1159.5 L1134 1145.5 L1139.5 1140 L1145 1145.5 L1145 1159.5 Z" fill="#0078d7"/></svg>
</body></html>
